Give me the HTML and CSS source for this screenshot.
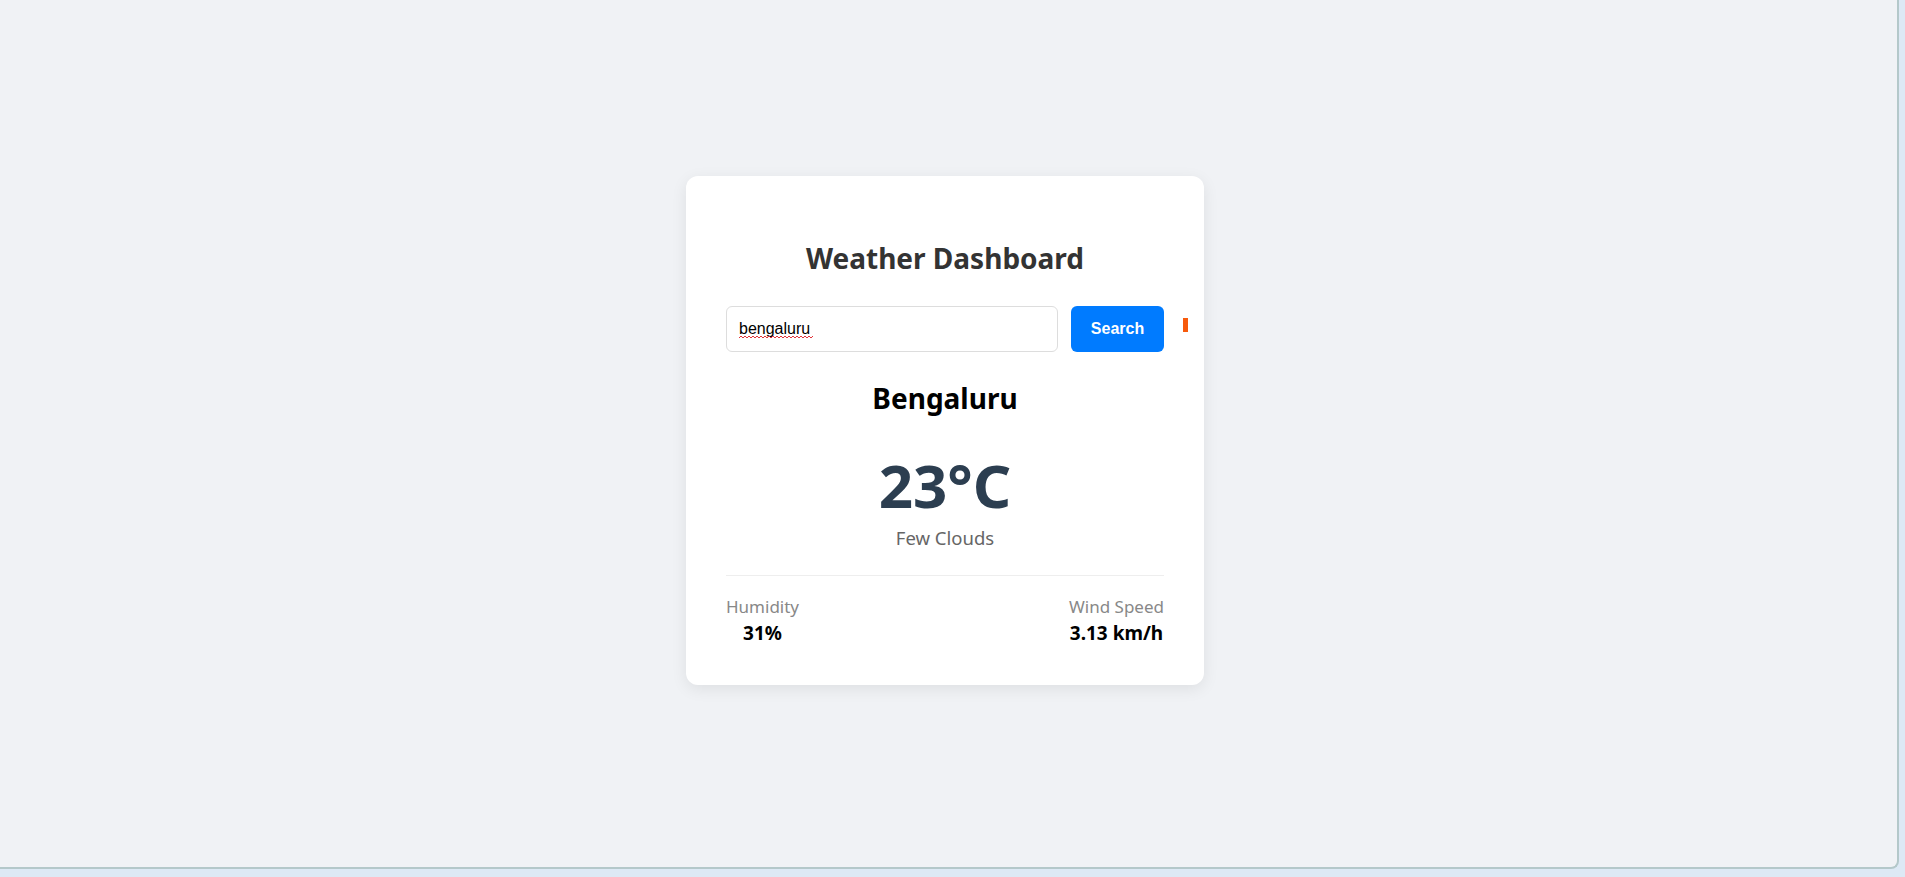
FILE: index.html
```html
<!DOCTYPE html>
<html lang="en">
<head>
  <meta charset="UTF-8">
  <meta name="viewport" content="width=device-width, initial-scale=1.0">
  <title>Weather Dashboard</title>
  <link rel="stylesheet" href="styles.css">
</head>
<body>
  <div class="window">
    <div class="container">
      <h1 class="title">Weather Dashboard</h1>

      <div class="search">
        <div class="input-wrap">
          <input type="text" id="city" class="city-input" value="bengaluru" spellcheck="true">
          <!-- spellcheck squiggle -->
          <svg class="squiggle" width="74" height="4" viewBox="0 0 74 4">
            <polyline points="0,3 2,1 4,3 6,1 8,3 10,1 12,3 14,1 16,3 18,1 20,3 22,1 24,3 26,1 28,3 30,1 32,3 34,1 36,3 38,1 40,3 42,1 44,3 46,1 48,3 50,1 52,3 54,1 56,3 58,1 60,3 62,1 64,3 66,1 68,3 70,1 72,3 74,1" fill="none" stroke="#e0343a" stroke-width="1"/>
          </svg>
        </div>
        <button id="search-btn">Search</button>
        <span class="loader"></span>
      </div>

      <div class="weather">
        <h2 class="city-name">Bengaluru</h2>
        <div class="temp">23°C</div>
        <div class="desc">Few Clouds</div>

        <div class="details">
          <div class="stat">
            <div class="label">Humidity</div>
            <div class="value">31%</div>
          </div>
          <div class="stat">
            <div class="label">Wind Speed</div>
            <div class="value">3.13 km/h</div>
          </div>
        </div>
      </div>
    </div>
  </div>
</body>
</html>
```

FILE: styles.css
```css
body {
  margin: 0;
  padding: 0;
  font-family: "Noto Sans", "Open Sans", sans-serif;
  background-color: #dde9f5;
  height: 877px;
  overflow: hidden;
}

/* browser window frame */
.window {
  width: 1890px;
  height: 860px;
  padding: 0 7px 7px 0;
  background-color: #f0f2f5;
  border-right: 2px solid #b4c8ca;
  border-bottom: 2px solid #b4c8ca;
  border-bottom-right-radius: 8px;
  display: flex;
  justify-content: center;
  align-items: center;
}

.container {
  width: 518px;
  background-color: #fff;
  border-radius: 12px;
  box-shadow: 0 4px 16px rgba(0, 0, 0, 0.08);
  padding: 40px;
  box-sizing: border-box;
  text-align: center;
}

.title {
  font-size: 28px;
  line-height: 36px;
  font-weight: 700;
  color: #333;
  margin: 24px 0 0;
}

.search {
  display: flex;
  gap: 13px;
  margin-top: 30px;
}

.input-wrap {
  flex: 1;
  min-width: 0;
  position: relative;
  display: flex;
}

.city-input {
  flex: 1;
  min-width: 0;
  height: 46px;
  box-sizing: border-box;
  padding: 0 12px;
  border: 1px solid #ddd;
  border-radius: 6px;
  font-family: "Liberation Sans", Arial, sans-serif;
  font-size: 16px;
  color: #000;
  outline: none;
}

.squiggle {
  position: absolute;
  left: 13px;
  top: 29px;
  pointer-events: none;
}

button {
  width: 93px;
  height: 46px;
  border: none;
  border-radius: 6px;
  background-color: #007bff;
  color: #fff;
  font-family: "Liberation Sans", Arial, sans-serif;
  font-size: 16px;
  font-weight: 700;
  cursor: pointer;
}

.loader {
  flex: none;
  width: 5px;
  height: 14px;
  margin: 12px -24px 0 6px;
  background-color: #f75a0c;
}

.city-name {
  font-size: 28px;
  line-height: 34px;
  font-weight: 700;
  color: #000;
  margin: 29px 0 0;
}

.temp {
  font-size: 60px;
  line-height: 64px;
  font-weight: 700;
  color: #2c3e50;
  margin-top: 38px;
}

.desc {
  font-size: 18.5px;
  line-height: 24px;
  color: #666;
  margin-top: 9px;
}

.details {
  display: flex;
  justify-content: space-between;
  margin-top: 25px;
  padding-top: 20px;
  border-top: 1px solid #eee;
}

.stat .label {
  font-size: 17px;
  line-height: 22px;
  color: #888;
}

.stat .value {
  font-size: 19px;
  line-height: 24px;
  font-weight: 700;
  color: #000;
  margin-top: 3px;
}
```
